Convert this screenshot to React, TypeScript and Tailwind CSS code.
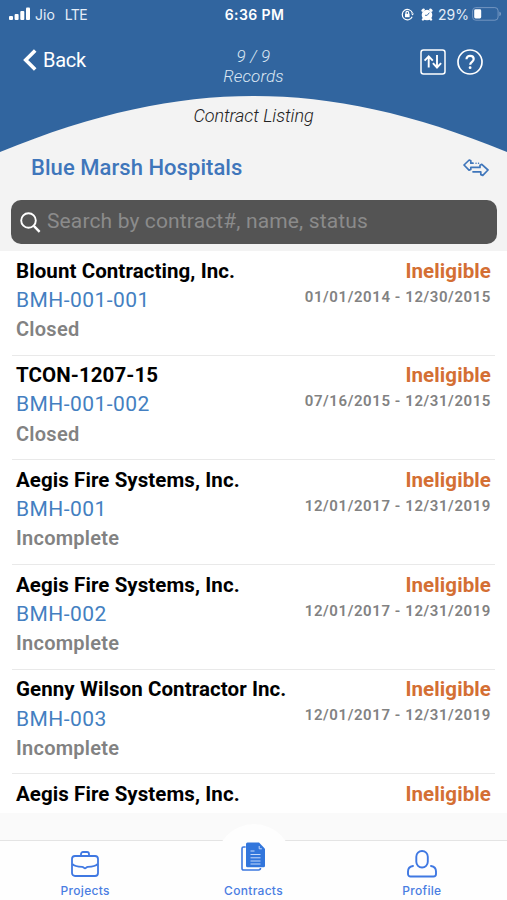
type Contract = { name: string; id?: string; status?: string; dates?: string };

const contracts: Contract[] = [
  { name: "Blount Contracting, Inc.", id: "BMH-001-001", status: "Closed", dates: "01/01/2014 - 12/30/2015" },
  { name: "TCON-1207-15", id: "BMH-001-002", status: "Closed", dates: "07/16/2015 - 12/31/2015" },
  { name: "Aegis Fire Systems, Inc.", id: "BMH-001", status: "Incomplete", dates: "12/01/2017 - 12/31/2019" },
  { name: "Aegis Fire Systems, Inc.", id: "BMH-002", status: "Incomplete", dates: "12/01/2017 - 12/31/2019" },
  { name: "Genny Wilson Contractor Inc.", id: "BMH-003", status: "Incomplete", dates: "12/01/2017 - 12/31/2019" },
  { name: "Aegis Fire Systems, Inc." },
];

function StatusBar() {
  return (
    <div className="grid h-7 grid-cols-3 items-center pl-[9px] pr-[7px] font-['Inter',sans-serif] text-[14px] text-[#e4edf8]">
      <div className="flex items-center">
        <svg width="22" height="14" viewBox="0 0 22 14" fill="#fff">
          <rect x="0" y="9" width="4" height="4" rx="1" />
          <rect x="5.6" y="7" width="4" height="6" rx="1" />
          <rect x="11.3" y="4" width="4" height="9" rx="1" />
          <rect x="17" y="0.5" width="4" height="12.5" rx="1" />
        </svg>
        <span className="ml-1">Jio</span>
        <span className="ml-[10px] tracking-[-0.6px]">LTE</span>
      </div>
      <div className="text-center text-[14px] font-semibold tracking-[0.4px] text-white">6:36 PM</div>
      <div className="-mr-[2px] flex items-center justify-end">
        <svg width="13" height="13" viewBox="0 0 13 13" fill="none" stroke="#fff" strokeWidth="1.2">
          <path d="M11.2 8.8A5.2 5.2 0 1 1 11.4 5" />
          <path d="M10 5.4h3l-1.4 2.2z" fill="#fff" stroke="none" />
          <rect x="4" y="5.8" width="4.6" height="3.4" fill="#fff" stroke="none" />
          <path d="M5 6V4.6a1.3 1.3 0 0 1 2.6 0V6" />
        </svg>
        <svg className="ml-[7px]" width="12" height="13" viewBox="0 0 12 13">
          <circle cx="6" cy="7" r="5.3" fill="#fff" />
          <path d="M1.600 2.700 2.600 1.700M10.400 2.700 9.400 1.700M2 11.500l.8-.8M10 11.500l-.8-.8" stroke="#fff" strokeWidth="2.4" strokeLinecap="round" />
          <path d="M8.300 4.700 6.200 7.300H4" stroke="#31659f" strokeWidth="0.9" fill="none" />
        </svg>
        <span className="ml-[5px] text-[14px] tracking-[0px]">29%</span>
        <svg className="ml-[3px]" width="30" height="14" viewBox="0 0 30 14" fill="none">
          <rect x="0.6" y="0.6" width="25.500" height="12.6" rx="3.2" stroke="#7396c1" strokeWidth="1" />
          <rect x="2.2" y="2.3" width="7" height="9.2" rx="1.4" fill="#fff" />
          <path d="M27.500 4.800c1.700.5 1.700 3.700 0 4.200z" fill="#8faccf" />
        </svg>
      </div>
    </div>
  );
}

function Header() {
  return (
    <header className="relative h-[152px] bg-[#31659f]">
      <svg className="absolute inset-x-0 bottom-0" width="507" height="57" viewBox="0 0 507 57">
        <path d="M0 57C95 18 175 1 253.500 1S412 18 507 57Z" fill="#f3f3f3" />
      </svg>
      <div className="relative">
        <StatusBar />
        <div className="grid grid-cols-3 pl-[23px] pr-[24px] pt-[18px] text-white">
          <div className="flex h-7 items-center">
            <svg width="14" height="22" viewBox="0 0 14 22" fill="none" stroke="#fff" strokeWidth="3.6">
              <path d="M12.2 1.500 2.700 11l9.500 9.500" />
            </svg>
            <span className="ml-[6px] text-[20px] tracking-[-0.300px]">Back</span>
          </div>
          <div className="pl-px text-center text-[17px] font-light italic leading-5 tracking-[0.150px] text-[#dce7f3]">
            <div>9 / 9</div>
            <div>Records</div>
          </div>
          <div className="flex h-8 items-center justify-end gap-[11px]">
            <svg width="26" height="26" viewBox="0 0 26 26" fill="none" stroke="#fff">
              <rect x="1" y="1" width="24" height="24" rx="2.500" strokeWidth="1.500" />
              <path d="M8.700 18.500V7.200M4.600 11.600l4.100-4.300 4.100 4.300M17 6v12M12.900 14.200l4.100 4.300 4.100-4.300" strokeWidth="1.900" />
            </svg>
            <svg width="26" height="26" viewBox="0 0 26 26" fill="none" stroke="#fff">
              <circle cx="13" cy="13" r="12" strokeWidth="1.700" />
              <path d="M9.500 10.300c0-4.700 7.200-4.300 7.200-.2 0 2.700-3.500 2.800-3.500 5.700" strokeWidth="2.200" />
              <circle cx="13.100" cy="18.700" r="1.400" fill="#fff" stroke="none" />
            </svg>
          </div>
        </div>
        <h1 className="mt-[20px] text-center text-[18px] font-light italic leading-5 tracking-[-0.050px] text-[#222]">Contract Listing</h1>
      </div>
    </header>
  );
}

function SwapIcon() {
  return (
    <svg width="26" height="18" viewBox="0 0 26 18" fill="none" stroke="#3f76bb" strokeWidth="1.700" strokeLinejoin="round" strokeLinecap="round">
      <path d="M10 4.200H7.800V1.800L6.200 1 1 6l5 5.200 1.800-.8V8.400h9.200V6.200l1.800-.8L25 11l-5.200 5.400-2-.8v-2.800H10" />
      <path d="M13 4.200h.1M15.500 4.200h.1" strokeWidth="1.400" />
    </svg>
  );
}

function ContractRow({ item }: { item: Contract }) {
  return (
    <li className="mx-3 flex h-[104.700px] shrink-0 justify-between border-b border-[#e9e9e9] pl-1 pr-1 pt-[5.500px] last:h-[38px] last:border-b-0">
      <div className="whitespace-nowrap text-[20px] leading-[29.300px]">
        <div className="text-[20.500px] font-bold tracking-[0.080px] text-black">{item.name}</div>
        {item.id && <div className="text-[21px] tracking-[0.450px] text-[#447fc1]">{item.id}</div>}
        {item.status && <div className="font-semibold tracking-[0.260px] text-[#828282]">{item.status}</div>}
      </div>
      <div className="whitespace-nowrap text-right">
        <div className="text-[20.500px] font-bold leading-[29px] tracking-[0.100px] text-[#d46f34]">Ineligible</div>
        {item.dates && (
          <div className="-mt-px text-[15px] font-semibold leading-6 tracking-[0.580px] text-[#828282]">{item.dates}</div>
        )}
      </div>
    </li>
  );
}

function TabBar() {
  return (
    <nav className="relative h-[60px] border-t border-[#e4e4e4] bg-[#fefefe] font-['Inter',sans-serif] text-[12px] font-medium leading-4 tracking-[0.300px] text-[#4a7de2]">
      <div className="absolute left-1/2 -top-[17px] size-[76px] -translate-x-1/2 rounded-full bg-[#fefefe]" />
      <div className="relative grid h-full grid-cols-3 px-[1px]">
        <div className="flex flex-col items-center pt-[9px]">
          <svg width="28" height="28" viewBox="0 0 28 28" fill="none" stroke="#3f78e2" strokeWidth="1.800">
            <rect x="1" y="6" width="26" height="20" rx="3" />
            <path d="M10 6V4a2 2 0 0 1 2-2h4a2 2 0 0 1 2 2v2M1.500 14c2 2.700 6 2.800 9.700 2.800 1.500 0 1.600 1.500 2.800 1.500s1.300-1.500 2.800-1.500c3.700 0 7.700-.1 9.700-2.800" />
          </svg>
          <span className="mt-[5px]">Projects</span>
        </div>
        <div className="flex flex-col items-center pt-[1px]">
          <svg width="25" height="30" viewBox="0 0 25 30">
            <path d="M4.700 5H2.500A1.500 1.500 0 0 0 1 6.500v20A1.500 1.500 0 0 0 2.500 28h15a2 2 0 0 0 2-2" fill="none" stroke="#3c78df" strokeWidth="1.600" />
            <path d="M6.500.5H18l6 6.200v17a1.500 1.500 0 0 1-1.500 1.500h-16A1.500 1.500 0 0 1 5 23.700V2A1.500 1.500 0 0 1 6.500.5Z" fill="#3276dc" />
            <path d="M18.200 4v2.800h2.600M9.500 9h4M9.500 12.500h10M9.500 15.800h10M9.500 19h10M9.500 22h10" fill="none" stroke="#c5d9fa" strokeWidth="1" />
          </svg>
          <span className="mt-[11px]">Contracts</span>
        </div>
        <div className="flex flex-col items-center pt-[9px]">
          <svg width="30" height="28" viewBox="0 0 30 28" fill="none" stroke="#3f78e2" strokeWidth="1.900" strokeLinecap="round">
            <rect x="9.300" y="1" width="11.500" height="16.500" rx="5.700" />
            <path d="M6 16c-3 .5-5 2.500-5 5.500V24a2.500 2.500 0 0 0 2.500 2.500h23A2.500 2.500 0 0 0 29 24v-2.500c0-3-2-5-5-5.500" />
          </svg>
          <span className="mt-[5px]">Profile</span>
        </div>
      </div>
    </nav>
  );
}

export default function App() {
  return (
    <div className="flex h-[900px] w-[507px] flex-col overflow-hidden bg-[#f3f3f3] font-['Roboto',sans-serif]">
      <Header />
      <div className="flex h-[48px] items-center justify-between pl-[31px] pr-[18px] pb-[17px]">
        <h2 className="text-[22px] font-medium tracking-[0.050px] text-[#3f76bb]">Blue Marsh Hospitals</h2>
        <SwapIcon />
      </div>
      <div className="ml-[11px] mr-[10px] flex h-[44px] shrink-0 items-center rounded-[10px] bg-[#545454] pl-[9px]">
        <svg width="21" height="21" viewBox="0 0 21 21" fill="none" stroke="#fff" strokeWidth="1.900">
          <circle cx="8.500" cy="8.500" r="7.300" />
          <path d="m13.800 13.800 5.800 6" strokeWidth="2.400" />
        </svg>
        <span className="ml-[6px] text-[21px] tracking-[0.130px] text-[#8b8b8b]">Search by contract#, name, status</span>
      </div>
      <ul className="mt-[7px] flex h-[562px] shrink-0 flex-col bg-white">
        {contracts.map((item, i) => (
          <ContractRow key={i} item={item} />
        ))}
      </ul>
      <div className="h-[27px] shrink-0 bg-[#fafafa]" />
      <TabBar />
    </div>
  );
}
